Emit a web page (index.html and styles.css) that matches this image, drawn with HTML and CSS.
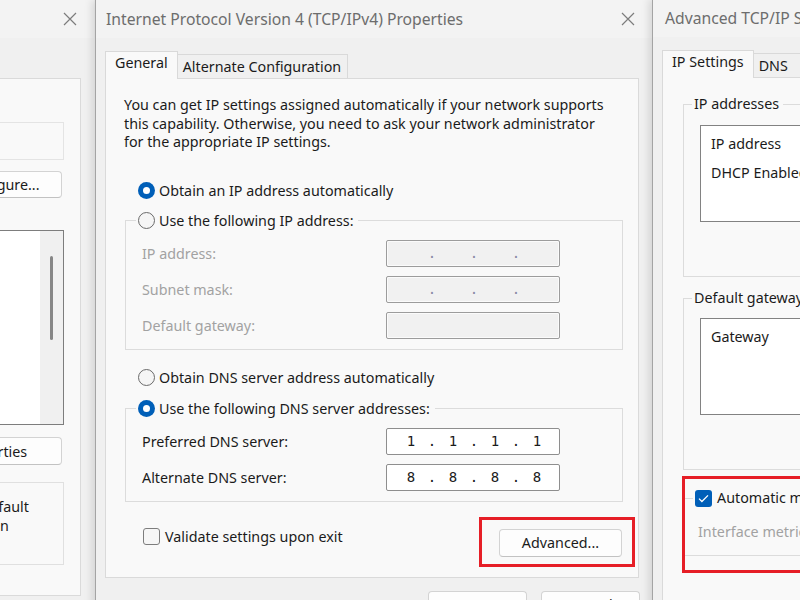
FILE: index.html
```html
<!DOCTYPE html>
<html lang="en">

<head>
    <meta charset="UTF-8">
    <meta name="viewport" content="width=device-width, initial-scale=1.0">
    <title>Internet Protocol Version 4 (TCP/IPv4) Properties</title>
    <link rel="stylesheet" href="styles.css">
</head>

<body>
    <div class="desktop">

        <!-- Ethernet Properties, behind the others -->
        <div class="window win-network">
            <div class="titlebar">
                <span class="title">Ethernet Properties</span>
                <span class="close">
                    <svg width="14" height="14" viewBox="0 0 14 14"><path d="M1 1L13 13M13 1L1 13" /></svg>
                </span>
            </div>
            <div class="body">
                <div class="tabs">
                    <span class="tab active">Networking</span>
                    <span class="tab">Sharing</span>
                </div>
                <div class="panel net-panel">
                    <div class="line">Connect using:</div>
                    <div class="adapter">Intel(R) Ethernet Connection (7) I219-V</div>
                    <button class="button configure">Configure...</button>
                    <div class="line items-label">This connection uses the following items:</div>
                    <div class="listbox items">
                        <ul>
                            <li>Client for Microsoft Networks</li>
                            <li>File and Printer Sharing for Microsoft Networks</li>
                            <li>QoS Packet Scheduler</li>
                            <li>Internet Protocol Version 4 (TCP/IPv4)</li>
                            <li>Microsoft Network Adapter Multiplexor</li>
                            <li>Microsoft LLDP Protocol Driver</li>
                            <li>Internet Protocol Version 6 (TCP/IPv6)</li>
                        </ul>
                        <div class="scrollbar"><span class="thumb"></span></div>
                    </div>
                    <div class="item-buttons">
                        <button class="button">Install...</button>
                        <button class="button">Uninstall</button>
                        <button class="button properties">Properties</button>
                    </div>
                    <fieldset class="group description">
                        <legend>Description</legend>
                        <div class="desc-text">
                            <div>Transmission Control Protocol/Internet Protocol. The default</div>
                            <div>wide area network protocol that provides communication</div>
                            <div>across diverse interconnected networks.</div>
                        </div>
                    </fieldset>
                </div>
            </div>
        </div>

        <!-- IPv4 properties -->
        <div class="window win-ipv4">
            <div class="titlebar">
                <span class="title">Internet Protocol Version 4 (TCP/IPv4) Properties</span>
                <span class="close">
                    <svg width="14" height="14" viewBox="0 0 14 14"><path d="M1 1L13 13M13 1L1 13" /></svg>
                </span>
            </div>
            <div class="body">
                <div class="tabs">
                    <span class="tab active">General</span>
                    <span class="tab">Alternate Configuration</span>
                </div>
                <div class="panel ipv4-panel">
                    <p class="intro">You can get IP settings assigned automatically if your network supports<br>
                        this capability. Otherwise, you need to ask your network administrator<br>
                        for the appropriate IP settings.</p>

                    <div class="option first-auto"><span class="radio on"></span>Obtain an IP address automatically</div>

                    <fieldset class="group ip-group">
                        <legend><span class="option"><span class="radio"></span>Use the following IP address:</span></legend>
                        <div class="fields">
                            <div class="field-row disabled">
                                <label>IP address:</label>
                                <div class="ip"><span class="octet"></span><span class="dot">.</span><span class="octet"></span><span class="dot">.</span><span class="octet"></span><span class="dot">.</span><span class="octet"></span></div>
                            </div>
                            <div class="field-row disabled">
                                <label>Subnet mask:</label>
                                <div class="ip"><span class="octet"></span><span class="dot">.</span><span class="octet"></span><span class="dot">.</span><span class="octet"></span><span class="dot">.</span><span class="octet"></span></div>
                            </div>
                            <div class="field-row disabled">
                                <label>Default gateway:</label>
                                <div class="ip"></div>
                            </div>
                        </div>
                    </fieldset>

                    <div class="option second-auto"><span class="radio"></span>Obtain DNS server address automatically</div>

                    <fieldset class="group dns-group">
                        <legend><span class="option"><span class="radio on"></span>Use the following DNS server addresses:</span></legend>
                        <div class="fields">
                            <div class="field-row">
                                <label>Preferred DNS server:</label>
                                <div class="ip"><span class="octet">1</span><span class="dot">.</span><span class="octet">1</span><span class="dot">.</span><span class="octet">1</span><span class="dot">.</span><span class="octet">1</span></div>
                            </div>
                            <div class="field-row">
                                <label>Alternate DNS server:</label>
                                <div class="ip"><span class="octet">8</span><span class="dot">.</span><span class="octet">8</span><span class="dot">.</span><span class="octet">8</span><span class="dot">.</span><span class="octet">8</span></div>
                            </div>
                        </div>
                    </fieldset>

                    <div class="footer-row">
                        <div class="option check-option"><span class="checkbox"></span>Validate settings upon exit</div>
                        <button class="button advanced">Advanced...</button>
                    </div>

                    <div class="highlight"></div>
                </div>
                <div class="dialog-buttons">
                    <button class="button">OK</button>
                    <button class="button">Cancel</button>
                </div>
            </div>
        </div>

        <!-- Advanced TCP/IP settings, on top -->
        <div class="window win-advanced">
            <div class="titlebar">
                <span class="title adv-title">Advanced TCP/IP Settings</span>
            </div>
            <div class="body">
                <div class="tabs">
                    <span class="tab active">IP Settings</span>
                    <span class="tab dns-tab">DNS</span>
                    <span class="tab">WINS</span>
                </div>
                <div class="panel adv-panel">
                    <fieldset class="group adv-group">
                        <legend>IP addresses</legend>
                        <div class="list-wrap">
                            <div class="listbox table">
                                <div class="trow"><span>IP address</span><span>Subnet mask</span></div>
                                <div class="trow"><span>DHCP Enabled</span></div>
                            </div>
                            <div class="list-buttons">
                                <button class="button">Add...</button>
                                <button class="button">Edit...</button>
                                <button class="button">Remove</button>
                            </div>
                        </div>
                    </fieldset>

                    <fieldset class="group adv-group gateways">
                        <legend>Default gateways:</legend>
                        <div class="list-wrap">
                            <div class="listbox table">
                                <div class="trow"><span>Gateway</span><span>Metric</span></div>
                            </div>
                            <div class="list-buttons">
                                <button class="button">Add...</button>
                                <button class="button">Edit...</button>
                                <button class="button">Remove</button>
                            </div>
                        </div>
                    </fieldset>

                    <fieldset class="group adv-group metric">
                        <legend><span class="option"><span class="checkbox on">
                            <svg width="11" height="9" viewBox="0 0 11 9"><path d="M1 4.6L3.9 7.5L10 1.4" /></svg>
                        </span>Automatic metric</span></legend>
                        <div class="metric-row">
                            <label>Interface metric:</label>
                            <div class="metric-input"></div>
                        </div>
                    </fieldset>

                    <div class="highlight adv-highlight"></div>
                </div>
            </div>
        </div>

    </div>
</body>

</html>
```

FILE: styles.css
```css
* {
    box-sizing: border-box;
}

body {
    margin: 0;
    font-family: "Noto Sans", "Open Sans", sans-serif;
    font-size: 14.3px;
    color: #1b1b1b;
    background: #f0f0f0;
}

.desktop {
    position: relative;
    width: 800px;
    height: 600px;
    overflow: hidden;
    background: #f0f0f0;
}

/* windows sit on the desktop at their own places */
.window {
    position: absolute;
    top: 0;
    height: 660px;
    background: #f0f0f0;
}

.win-network {
    left: -406px;
    width: 500px;
}

.win-ipv4 {
    left: 95px;
    width: 557px;
    border-left: 1px solid #a4a4a4;
    box-shadow: -3px 0 8px rgba(0, 0, 0, 0.12);
}

.win-advanced {
    left: 652px;
    top: -1px;
    width: 560px;
    border-left: 1px solid #a4a4a4;
    box-shadow: -3px 0 8px rgba(0, 0, 0, 0.12);
}

.titlebar {
    height: 38px;
    display: flex;
    align-items: center;
    justify-content: space-between;
    background: #f3f3f3;
}

.title {
    padding-left: 10px;
    font-size: 15.7px;
    color: #6d6d6d;
    white-space: nowrap;
}

.adv-title {
    padding-left: 12px;
}

.close {
    width: 46px;
    height: 38px;
    display: flex;
    align-items: center;
    justify-content: center;
    margin-right: 1px;
}

.close path {
    stroke: #7c7c7c;
    stroke-width: 1.2;
    fill: none;
}

.body {
    padding: 13px 13px 0 9px;
}

/* tabs */
.tabs {
    display: flex;
    align-items: flex-end;
    height: 27px;
}

.tab {
    height: 24px;
    padding: 0 6px 0 5px;
    border: 1px solid #d9d9d9;
    border-bottom: none;
    background: #f0f0f0;
    line-height: 23px;
    white-space: nowrap;
}

.tab+.tab {
    border-left: none;
}

.tab.active {
    position: relative;
    z-index: 1;
    height: 28px;
    margin-bottom: -1px;
    padding: 0 9px;
    background: #f9f9f9;
    line-height: 22px;
}

.dns-tab {
    padding-right: 16px;
}

.panel {
    position: relative;
    background: #f9f9f9;
    border: 1px solid #dadada;
}

/* radios and checkboxes */
.option {
    display: flex;
    align-items: center;
    gap: 4px;
    height: 20px;
    white-space: nowrap;
}

.radio {
    flex: none;
    width: 17px;
    height: 17px;
    border-radius: 50%;
    border: 1px solid #6a6a6a;
    background: #f5f5f5;
}

.radio.on {
    display: flex;
    align-items: center;
    justify-content: center;
    border: none;
    background: #005fb8;
}

.radio.on::after {
    content: "";
    width: 7px;
    height: 7px;
    border-radius: 50%;
    background: #fff;
}

.checkbox {
    flex: none;
    display: flex;
    align-items: center;
    justify-content: center;
    width: 17px;
    height: 17px;
    border: 1px solid #7d7d7d;
    border-radius: 3px;
    background: #f6f6f6;
}

.checkbox.on {
    border: none;
    background: #005fb8;
}

.checkbox path {
    stroke: #fff;
    stroke-width: 1.3;
    fill: none;
}

.button {
    height: 28px;
    padding: 0;
    font: inherit;
    color: #1b1b1b;
    background: #fdfdfd;
    border: 1px solid #d3d3d3;
    border-bottom-color: #c2c2c2;
    border-radius: 4px;
}

/* group boxes */
.group {
    margin: 0;
    padding: 0;
    min-width: 0;
    border: 1px solid #dcdcdc;
}

.group legend {
    padding: 0 5px 0 2px;
    margin-left: 10px;
    line-height: 20px;
}

/* IPv4 dialog */
.ipv4-panel {
    padding: 17px 15px 20px 18px;
}

.intro {
    margin: 0;
    line-height: 18.6px;
    white-space: nowrap;
}

.first-auto {
    margin: 29px 0 0 14px;
}

.second-auto {
    margin: 18px 0 0 14px;
}

.ip-group {
    margin: 10px 0 0 1px;
}

.dns-group {
    margin: 11px 0 0 1px;
}

.fields {
    padding: 9px 0 10px 16px;
}

.field-row {
    display: flex;
    align-items: center;
    height: 27px;
}

.field-row+.field-row {
    margin-top: 9px;
}

.field-row label {
    width: 244px;
}

.field-row.disabled label {
    color: #a2a2a2;
}

.ip {
    display: flex;
    width: 174px;
    height: 27px;
    padding-left: 3px;
    border: 1px solid #8e8e8e;
    border-radius: 2px;
    background: #fff;
    font-family: "DejaVu Sans Mono", "Liberation Mono", monospace;
    font-size: 14px;
    line-height: 25px;
}

.field-row.disabled .ip {
    border-color: #9c9c9c;
    background: #f1f1f1;
    box-shadow: inset 0 0 0 1px #fbfbfb;
    color: #8a8aa6;
}

.octet {
    width: 42px;
    text-align: center;
}

.dot {
    display: flex;
    justify-content: center;
    width: 0;
}

.footer-row {
    display: flex;
    align-items: flex-start;
    justify-content: space-between;
    margin-top: 26px;
}

.check-option {
    gap: 5px;
    height: 18px;
    margin-left: 19px;
}

.advanced {
    width: 123px;
    margin: 1px 1px 0 0;
}

.highlight {
    position: absolute;
    left: 373px;
    top: 438px;
    width: 156px;
    height: 50px;
    border: 3px solid #e61e26;
}

.dialog-buttons {
    display: flex;
    justify-content: flex-end;
    gap: 14px;
    margin: 13px -1px 0 0;
}

.dialog-buttons .button {
    width: 99px;
}

/* Ethernet dialog */
.net-panel {
    display: flex;
    flex-direction: column;
    padding: 12px 16px 30px 16px;
}

.line {
    line-height: 19px;
    white-space: nowrap;
}

.adapter {
    height: 38px;
    margin-top: 12px;
    padding-left: 40px;
    line-height: 36px;
    border: 1px solid #e4e4e4;
    white-space: nowrap;
}

.configure {
    align-self: flex-end;
    width: 123px;
    height: 27px;
    margin: 11px 2px 0 0;
}

.items-label {
    margin-top: 8px;
}

.items {
    display: flex;
    justify-content: space-between;
    height: 195px;
    margin-top: 5px;
    border: 1px solid #7d7d7d;
    background: #fff;
}

.items ul {
    margin: 0;
    padding: 4px 0 0 8px;
    list-style: none;
    line-height: 24px;
    white-space: nowrap;
}

.scrollbar {
    display: flex;
    justify-content: center;
    width: 23px;
    padding-top: 25px;
    background: #f0f0f0;
}

.thumb {
    width: 3px;
    height: 84px;
    border-radius: 2px;
    background: #868686;
}

.item-buttons {
    display: flex;
    justify-content: flex-end;
    gap: 12px;
    margin: 12px 2px 0 0;
}

.item-buttons .button {
    width: 120px;
}

.item-buttons .properties {
    width: 139px;
}

.description {
    height: 93px;
    margin-top: 7px;
    border-color: #e0e0e0;
}

.desc-text {
    padding: 5px 0 0 3px;
    line-height: 19px;
    white-space: nowrap;
}

/* Advanced TCP/IP dialog */
.adv-panel {
    padding: 16px 20px 60px 20px;
}

.adv-group legend {
    margin-left: 8px;
    padding: 0 4px 0 2px;
}

.list-wrap {
    padding: 11px 16px 14px 16px;
}

.gateways {
    margin-top: 11px;
}

.gateways .list-wrap {
    padding-top: 10px;
}

.table {
    height: 97px;
    padding-top: 8px;
    border: 1px solid #828282;
    background: #fff;
}

.trow {
    display: flex;
    height: 20px;
    line-height: 20px;
    padding-left: 10px;
    white-space: nowrap;
}

.trow+.trow {
    margin-top: 9px;
}

.trow span {
    width: 170px;
}

.list-buttons {
    display: flex;
    justify-content: flex-end;
    gap: 10px;
    margin-top: 12px;
}

.list-buttons .button {
    width: 90px;
}

.metric {
    margin-top: 18px;
}

.metric legend {
    margin-left: 9px;
    padding: 0 4px 0 2px;
}

.metric .option {
    gap: 5px;
}

.metric-row {
    display: flex;
    align-items: center;
    height: 20px;
    margin: 13px 0 14px 14px;
    white-space: nowrap;
}

.metric-row label {
    width: 140px;
    color: #a2a2a2;
}

.metric-input {
    width: 60px;
    height: 24px;
    border: 1px solid #a0a0a0;
    background: #f1f1f1;
}

.adv-highlight {
    left: 19px;
    top: 398px;
    width: 300px;
    height: 97px;
}
```
